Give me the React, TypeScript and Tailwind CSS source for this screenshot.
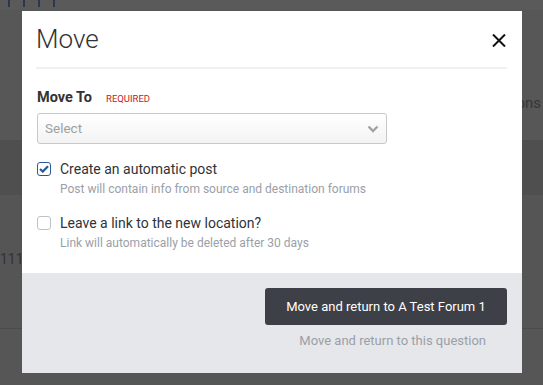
import React from "react";

export default function App() {
  return (
    <div className="relative w-[543px] h-[385px] overflow-hidden bg-[#575757]" style={{ fontFamily: "Roboto, 'Liberation Sans', sans-serif" }}>
      {/* background page (dimmed) */}
      <div className="flex flex-col w-full h-full">
        <div className="h-[10px] flex gap-[13px] pl-[8px] bg-[#5a5a5a]">
          <div className="w-[2px] h-[7px] bg-[#2c3650]" />
          <div className="w-[2px] h-[7px] bg-[#2c3650]" />
          <div className="w-[2px] h-[7px] bg-[#2c3650]" />
          <div className="w-[2px] h-[7px] bg-[#2c3650]" />
        </div>
        <div className="h-[130px] bg-[#575757] flex justify-end items-start pt-[83px] pr-[2px]">
          <span className="text-[15px] text-[#363636] leading-[20px] whitespace-nowrap">Questions</span>
        </div>
        <div className="h-[55px] bg-[#4f4f4f]" />
        <div className="h-[133px] bg-[#555555] flex items-start pt-[54px]">
          <span className="text-[14px] text-[#333] leading-[20px] whitespace-nowrap">1111</span>
        </div>
        <div className="h-px bg-[#4b4b4b]" />
        <div className="flex-1 bg-[#565656]" />
      </div>

      {/* modal */}
      <div className="absolute left-[22px] top-[11px] w-[500px] h-[362px] bg-white flex flex-col">
        <div className="pl-[14px] pr-[15px] pt-[12px]">
          <div className="flex items-center justify-between h-[32px]">
            <h2 className="text-[26px] leading-[32px] font-light text-[#333]">Move</h2>
            <svg width="14" height="13" viewBox="0 0 14 13" className="mr-[1px] mt-[2px]">
              <path d="M1 0.5 L13 12.5 M13 0.5 L1 12.5" stroke="#111" strokeWidth="2" />
            </svg>
          </div>
          <div className="h-[2px] bg-[#f0f0f0] mt-[12px]" />
        </div>

        <div className="flex-1 pl-[14px] pr-[15px] pt-[20px]">
          <div className="flex items-baseline gap-[14px] leading-[18px] h-[18px] ml-[1px]">
            <span className="text-[14.5px] font-bold text-[#333]">Move To</span>
            <span className="text-[9.5px] text-[#c41a1a] uppercase">Required</span>
          </div>
          <div className="mt-[6px] ml-[1px] w-[350px] h-[31px] rounded-[3px] border border-[#c8c8c8] bg-gradient-to-b from-white to-[#f3f3f3] flex items-center justify-between pl-[7px] pr-[7px]">
            <span className="text-[13.5px] text-[#a0a0a0]">Select</span>
            <svg width="12" height="8" viewBox="0 0 12 8">
              <path d="M1.5 1.5 L6 6 L10.5 1.5" stroke="#a3a3a3" strokeWidth="2.4" fill="none" />
            </svg>
          </div>

          <div className="mt-[17px] flex gap-[9px] ml-[1px]">
            <div className="w-[14px] h-[14px] mt-[1px] rounded-[3px] border border-[#2b5a92] flex items-center justify-center bg-white shrink-0">
              <svg width="10" height="8" viewBox="0 0 10 8">
                <path d="M1 4 L3.8 6.6 L9 1.2" stroke="#2b5a92" strokeWidth="2.2" fill="none" />
              </svg>
            </div>
            <div className="flex flex-col">
              <span className="text-[14px] leading-[16px] text-[#2f3337]">Create an automatic post</span>
              <span className="text-[12px] leading-[14px] mt-[5px] text-[#9aa0a8]">Post will contain info from source and destination forums</span>
            </div>
          </div>

          <div className="mt-[19px] flex gap-[9px] ml-[1px]">
            <div className="w-[14px] h-[14px] mt-[1px] rounded-[3px] border border-[#c2c2c2] bg-white shrink-0" />
            <div className="flex flex-col">
              <span className="text-[14px] leading-[16px] text-[#2f3337]">Leave a link to the new location?</span>
              <span className="text-[12px] leading-[14px] mt-[5px] text-[#9aa0a8]">Link will automatically be deleted after 30 days</span>
            </div>
          </div>
        </div>

        <div className="h-[100px] bg-[#e6e7ea] pr-[15px] pt-[15px] flex flex-col items-end">
          <button className="h-[37px] w-[242px] rounded-[3px] bg-[#3d4047] text-white text-[13px] flex items-center justify-center">
            Move and return to A Test Forum 1
          </button>
          <span className="mt-[7px] mr-[21px] text-[13px] leading-[18px] text-[#9aa0a8]">Move and return to this question</span>
        </div>
      </div>
    </div>
  );
}
